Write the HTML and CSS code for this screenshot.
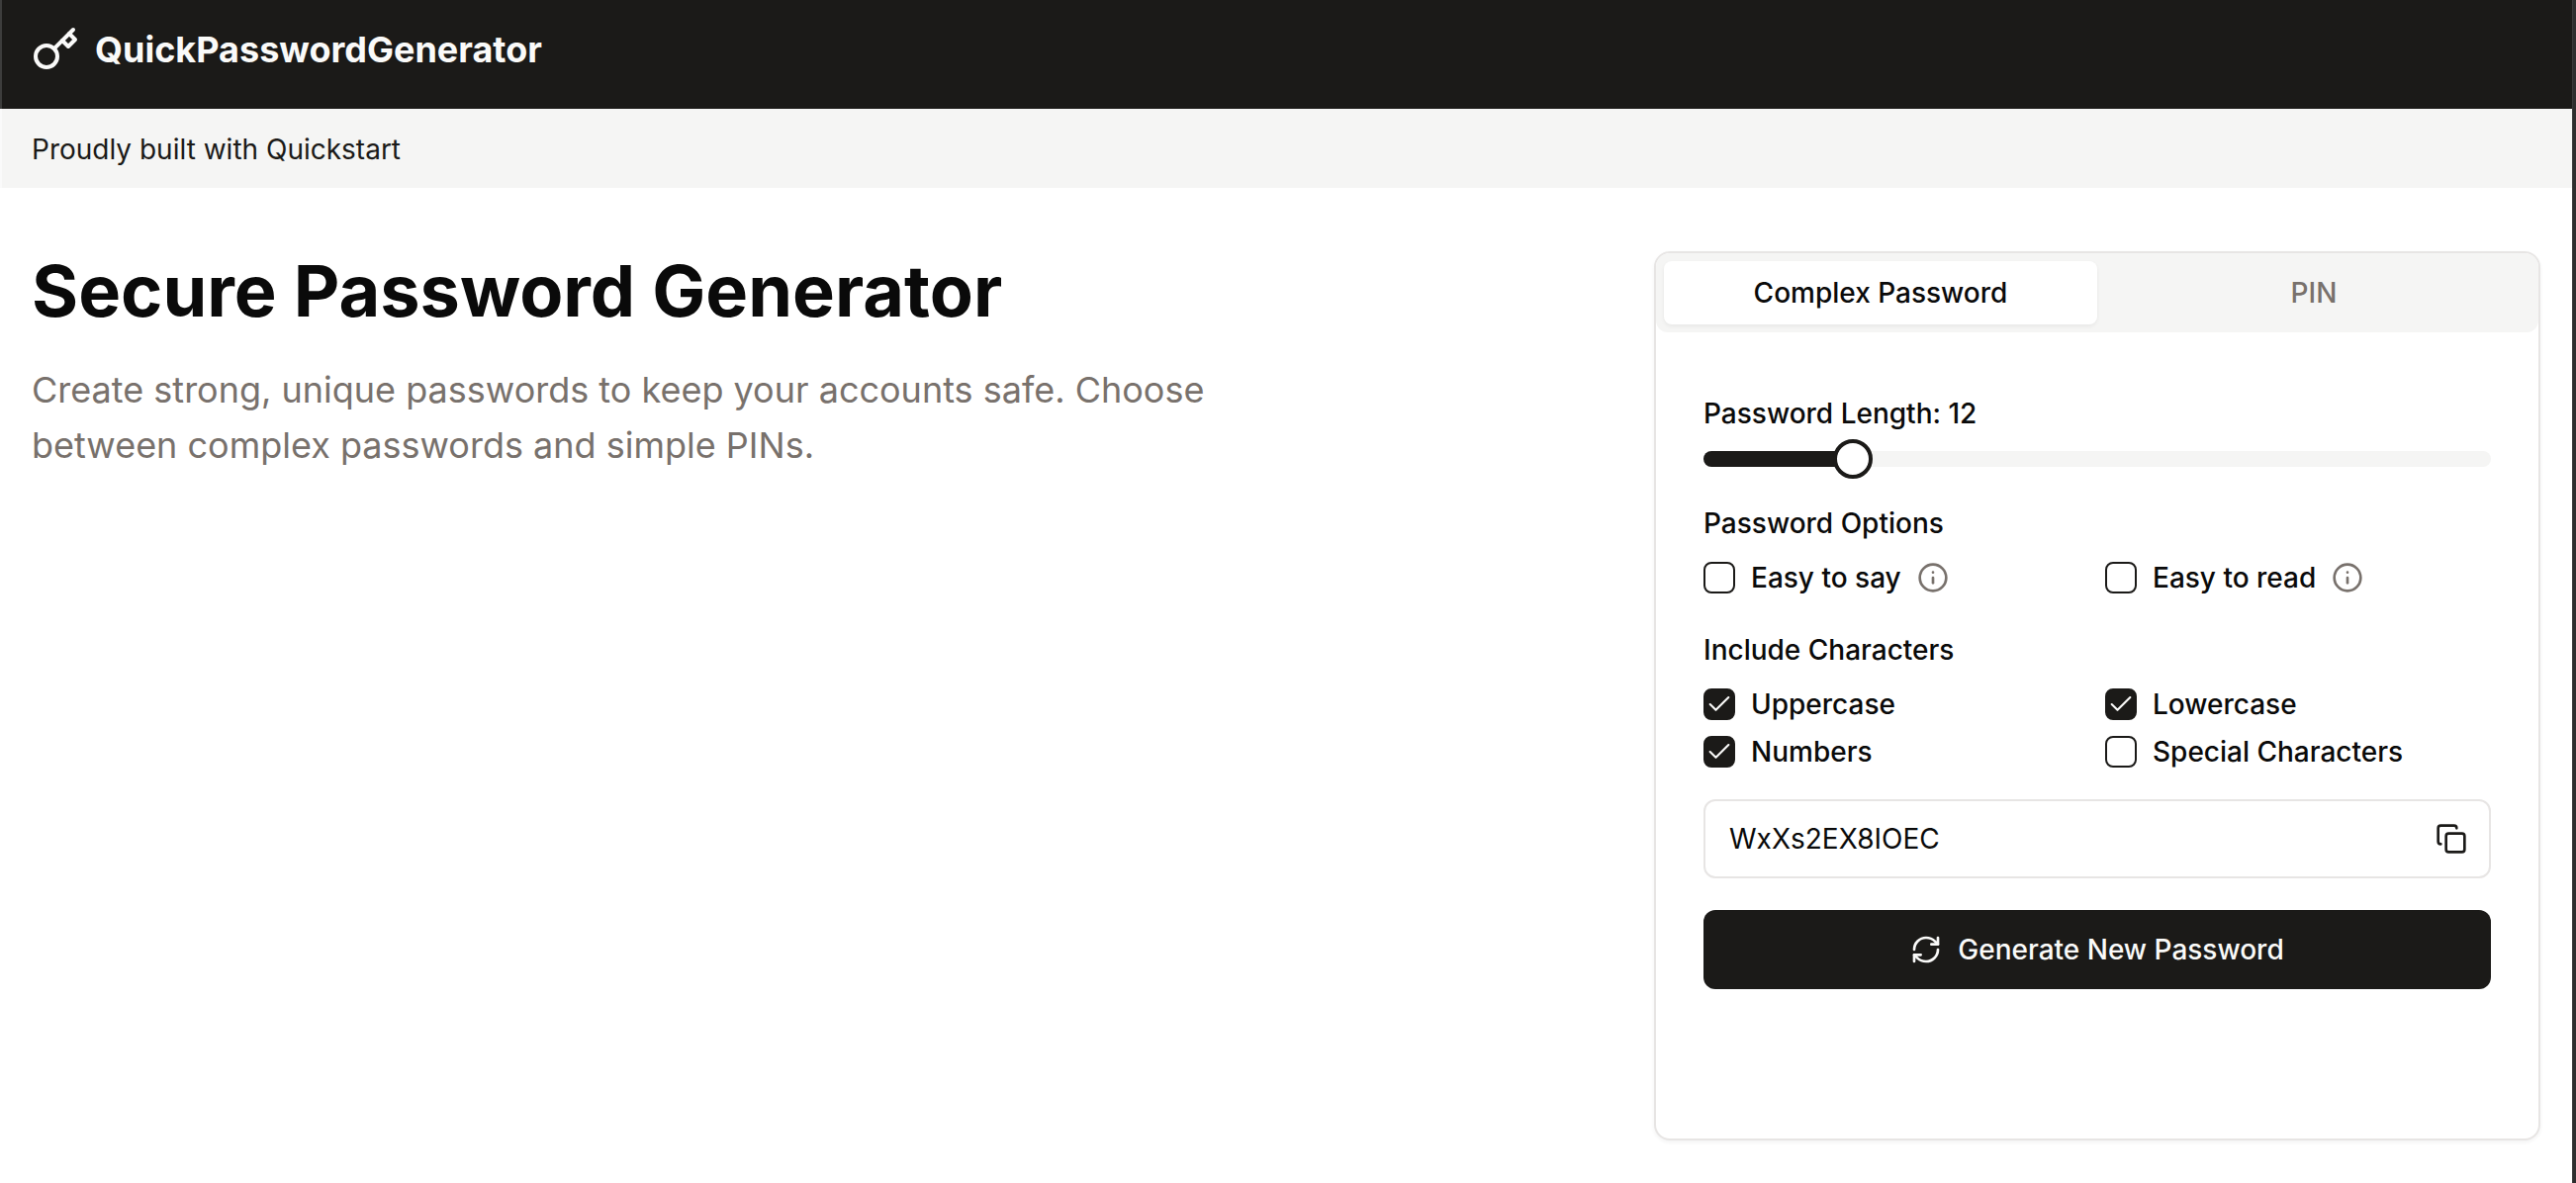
FILE: index.html
```html
<!DOCTYPE html>
<html lang="en">
<head>
<meta charset="utf-8">
<title>QuickPasswordGenerator</title>
<link rel="stylesheet" href="styles.css">
</head>
<body>
<div class="edge-left"></div>
<div class="page">
  <header class="topbar">
    <svg class="key" viewBox="0 0 24 24" fill="none" stroke="currentColor" stroke-width="2" stroke-linecap="round" stroke-linejoin="round"><path d="m15.5 7.5 3 3L22 7l-3-3"/><path d="m21 2-9.6 9.6"/><circle cx="7.5" cy="15.5" r="5.5"/></svg>
    <span class="brand">QuickPasswordGenerator</span>
  </header>
  <div class="subbar">Proudly built with Quickstart</div>
  <main class="main">
    <section class="intro">
      <h1>Secure Password Generator</h1>
      <p>Create strong, unique passwords to keep your accounts safe. Choose between complex passwords and simple PINs.</p>
    </section>
    <section class="card">
      <div class="tabs">
        <div class="tab active">Complex Password</div>
        <div class="tab">PIN</div>
      </div>
      <div class="content">
        <div class="label">Password Length: 12</div>
        <div class="slider">
          <div class="track"></div>
          <div class="fill"></div>
          <div class="thumb"></div>
        </div>
        <div class="label options-label">Password Options</div>
        <div class="grid">
          <label class="opt"><span class="box"></span><span>Easy to say</span>
            <svg class="info" viewBox="0 0 24 24" fill="none" stroke="currentColor" stroke-width="2" stroke-linecap="round" stroke-linejoin="round"><circle cx="12" cy="12" r="10"/><path d="M12 16v-4"/><path d="M12 8h.01"/></svg></label>
          <label class="opt"><span class="box"></span><span>Easy to read</span>
            <svg class="info" viewBox="0 0 24 24" fill="none" stroke="currentColor" stroke-width="2" stroke-linecap="round" stroke-linejoin="round"><circle cx="12" cy="12" r="10"/><path d="M12 16v-4"/><path d="M12 8h.01"/></svg></label>
        </div>
        <div class="label include-label">Include Characters</div>
        <div class="grid">
          <label class="opt"><span class="box on"><svg viewBox="0 0 24 24" fill="none" stroke="currentColor" stroke-width="1.8" stroke-linecap="round" stroke-linejoin="round"><path d="M20 6 9 17l-5-5"/></svg></span><span>Uppercase</span></label>
          <label class="opt"><span class="box on"><svg viewBox="0 0 24 24" fill="none" stroke="currentColor" stroke-width="1.8" stroke-linecap="round" stroke-linejoin="round"><path d="M20 6 9 17l-5-5"/></svg></span><span>Lowercase</span></label>
          <label class="opt"><span class="box on"><svg viewBox="0 0 24 24" fill="none" stroke="currentColor" stroke-width="1.8" stroke-linecap="round" stroke-linejoin="round"><path d="M20 6 9 17l-5-5"/></svg></span><span>Numbers</span></label>
          <label class="opt"><span class="box"></span><span>Special Characters</span></label>
        </div>
        <div class="output">
          <span>WxXs2EX8IOEC</span>
          <svg class="copy" viewBox="0 0 24 24" fill="none" stroke="currentColor" stroke-width="2" stroke-linecap="round" stroke-linejoin="round"><rect x="8" y="8" width="14" height="14" rx="2" ry="2"/><path d="M4 16c-1.1 0-2-.9-2-2V4c0-1.1.9-2 2-2h10c1.1 0 2 .9 2 2"/></svg>
        </div>
        <button class="generate" type="button">
          <svg class="refresh" viewBox="0 0 24 24" fill="none" stroke="currentColor" stroke-width="2" stroke-linecap="round" stroke-linejoin="round"><path d="M3 12a9 9 0 0 1 9-9 9.75 9.75 0 0 1 6.74 2.74L21 8"/><path d="M21 3v5h-5"/><path d="M21 12a9 9 0 0 1-9 9 9.75 9.75 0 0 1-6.74-2.74L3 16"/><path d="M8 16H3v5"/></svg>
          <span>Generate New Password</span>
        </button>
      </div>
    </section>
  </main>
</div>
<div class="edge-right"></div>
</body>
</html>
```
FILE: styles.css
```css
* { box-sizing: border-box; }
html, body { height: 100%; }
body {
  margin: 0;
  display: flex;
  height: 1196px;
  overflow: hidden;
  background: #fff;
  color: #0a0a0a;
  font-family: "Inter", "Liberation Sans", sans-serif;
  font-size: 28px;
  line-height: 40px;
}
.edge-left {
  flex: 0 0 2px;
  background: linear-gradient(#3d3d3c 0, #3d3d3c 110px, #fafafa 110px, #fafafa 190px, #fff 190px);
}
.edge-right {
  flex: 0 0 4px;
  background: linear-gradient(90deg, #3a3a3a 0, #3a3a3a 1px, #2e2e2e 1px);
}
.page {
  flex: 1;
  min-width: 0;
  display: flex;
  flex-direction: column;
}
.topbar {
  height: 110px;
  background: #1b1a18;
  color: #fafaf9;
  display: flex;
  align-items: center;
  gap: 16px;
  padding: 0 30px 11px;
}
.key { width: 48px; height: 48px; flex: none; }
.brand { font-size: 36px; font-weight: 700; line-height: 48px; }
.subbar {
  height: 80px;
  background: #f5f5f4;
  color: #1b1a18;
  display: flex;
  align-items: center;
  padding: 2px 30px 0;
}
.main {
  flex: 1;
  display: flex;
  justify-content: space-between;
  padding: 64px 32px 43px 30px;
  min-height: 0;
}
.intro { width: 1280px; }
h1 {
  margin: 0 0 32px;
  font-size: 72px;
  line-height: 80px;
  font-weight: 700;
}
.intro p {
  margin: 0;
  font-size: 36px;
  line-height: 56px;
  color: #78716c;
}
.card {
  width: 896px;
  border: 2px solid #e7e5e4;
  border-radius: 16px;
  background: #fff;
  box-shadow: 0 2px 4px rgba(0,0,0,.05);
  overflow: hidden;
}
.tabs {
  height: 80px;
  padding: 8px;
  display: grid;
  grid-template-columns: 1fr 1fr;
  background: #f5f5f4;
  border-radius: 12px;
}
.tab {
  display: flex;
  align-items: center;
  justify-content: center;
  border-radius: 8px;
  font-weight: 500;
  color: #78716c;
}
.tab.active {
  background: #fff;
  color: #0a0a0a;
  box-shadow: 0 2px 4px rgba(0,0,0,.06);
}
.content { padding: 62px 48px 0; }
.label { font-weight: 500; }
.slider { position: relative; height: 40px; margin-top: 6px; }
.track, .fill {
  position: absolute;
  top: 12px;
  height: 16px;
  border-radius: 8px;
}
.track { left: 0; right: 0; background: #f5f5f4; }
.fill { left: 0; width: 152px; background: #1b1a18; }
.thumb {
  position: absolute;
  left: 131px;
  top: 0;
  width: 40px;
  height: 40px;
  border-radius: 50%;
  border: 4px solid #1b1a18;
  background: #fff;
}
.options-label { margin-top: 25px; }
.include-label { margin-top: 33px; }
.grid {
  display: grid;
  grid-template-columns: 1fr 1fr;
  gap: 8px 16px;
  margin-top: 15px;
}
.opt {
  display: flex;
  align-items: center;
  gap: 16px;
  height: 40px;
  font-weight: 500;
}
.box {
  flex: none;
  width: 32px;
  height: 32px;
  border: 2px solid #1b1a18;
  border-radius: 8px;
  background: #fff;
  display: flex;
  align-items: center;
  justify-content: center;
}
.box.on { background: #1b1a18; color: #fafaf9; }
.box svg { width: 28px; height: 28px; flex: none; }
.info { width: 32px; height: 32px; color: #78716c; }
.output {
  margin-top: 28px;
  height: 80px;
  border: 2px solid #e7e5e4;
  border-radius: 12px;
  display: flex;
  align-items: center;
  justify-content: space-between;
  padding: 0 22px 0 24px;
}
.copy { width: 32px; height: 32px; color: #1b1a18; }
.generate {
  margin-top: 32px;
  width: 100%;
  height: 80px;
  border: 0;
  border-radius: 12px;
  background: #1b1a18;
  color: #fafaf9;
  font: 500 28px/40px "Inter", "Liberation Sans", sans-serif;
  display: flex;
  align-items: center;
  justify-content: center;
  gap: 16px;
}
.refresh { width: 32px; height: 32px; }
```
